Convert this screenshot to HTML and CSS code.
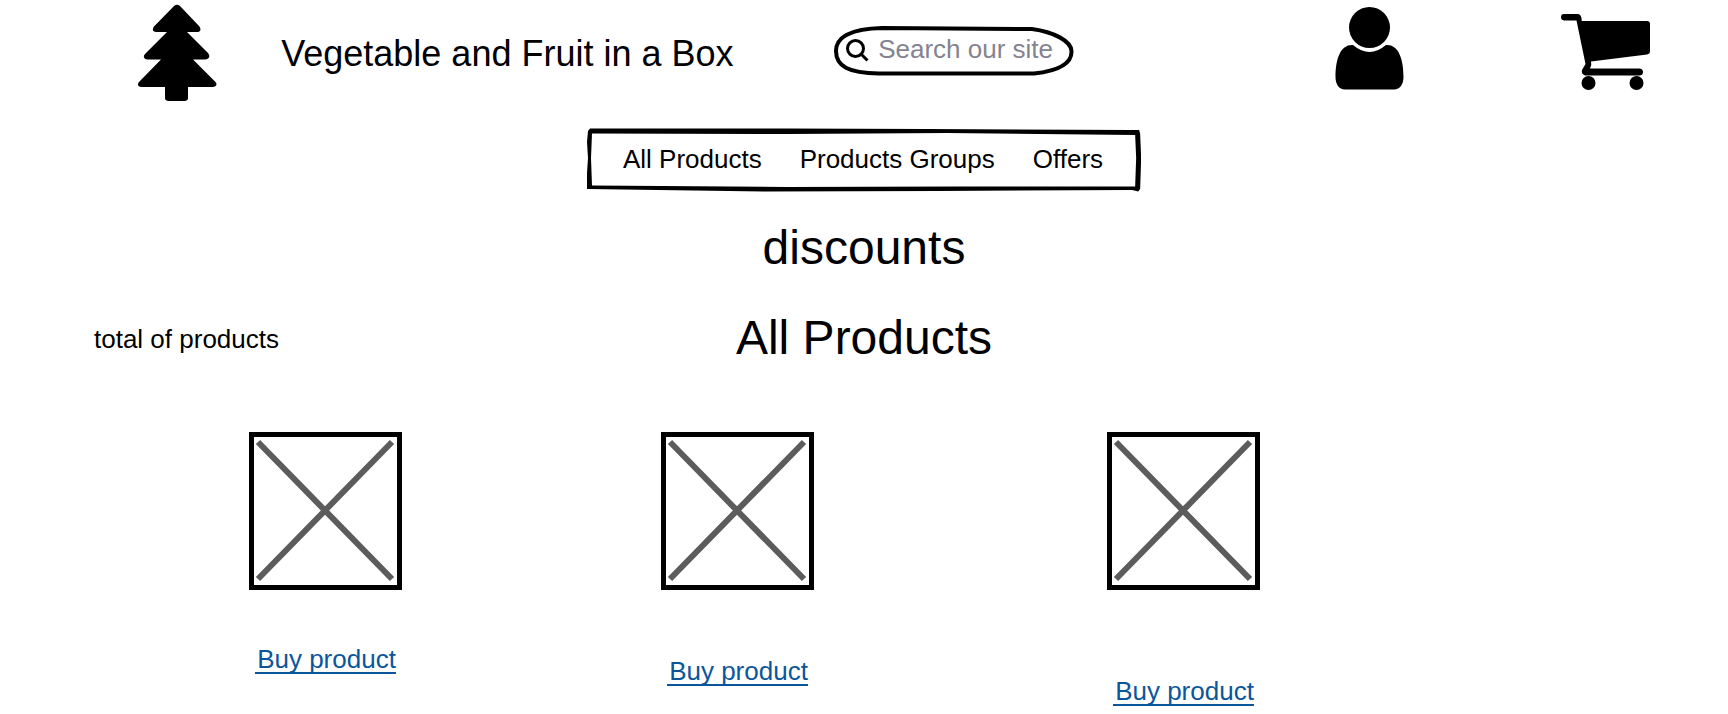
FILE: index.html
```html
<!DOCTYPE html>
<html lang="en">
<head>
<meta charset="utf-8">
<meta name="viewport" content="width=device-width, initial-scale=1">
<title>Vegetable and Fruit in a Box</title>
<link rel="stylesheet" href="styles.css">
</head>
<body>
<header class="header">
  <a class="icon-link" href="#" aria-label="Home">
    <svg class="logo" viewBox="0 0 80 98" aria-hidden="true">
      <path d="M36 2Q39-.5 42 2L61 22C64 26 62 28 58.500 28H49L70 49C73 53 70.500 55.500 67 55.500H55L77.500 78C80 81 77.500 83 74.500 83H50V93Q50.500 97 46.500 97H31Q26.500 97 27 93V83H3.500C0 83-1 80.500 1 78L23 55.500H9.500C5.500 55.500 5 52 7 50L29 28H18.500C14.500 28 14 25.500 16 22.500Z"/>
    </svg>
  </a>
  <p class="brand">Vegetable and Fruit in a Box</p>
  <form class="search" role="search">
    <svg class="frame" viewBox="0 0 240 50" preserveAspectRatio="none" aria-hidden="true">
      <path d="M48 2L198 3C220 6 237 15 237.500 25C238 38 222 45 200 47.500H45C14 47 2 40 2 25C2 12 14 3 48 2Z"/>
    </svg>
    <svg class="search-icon" viewBox="0 0 24 24" aria-hidden="true">
      <circle cx="9.500" cy="9.500" r="8"/><path d="M15 15L21.500 21.500"/>
    </svg>
    <input class="search-input" type="text" placeholder="Search our site" aria-label="Search our site">
  </form>
  <a class="icon-link" href="#" aria-label="Account">
    <svg class="user" viewBox="0 0 70 92" aria-hidden="true">
      <circle cx="34.500" cy="20.500" r="20.500"/>
      <path d="M18 38Q34.500 52 51 38C63 37 68.500 51 68.500 70C68.500 77 65 82.500 59 82.500H10C4 82.500 .5 77 .5 70C.5 51 6 37 18 38Z"/>
    </svg>
  </a>
  <a class="icon-link" href="#" aria-label="Cart">
    <svg class="cart" viewBox="0 0 90 78" aria-hidden="true">
      <path d="M3 0H17Q20.500 0 20.800 7H86Q89 7 89 10V37Q89 40 86 40.500L30 47.500Q31 51 29 54.500H79Q82 55 82 58Q82 61 79 61.500H24Q20 60 21 56L24.500 50L15.500 6.500H3Q0 6 0 3Q0 0 3 0Z"/>
      <circle cx="27.500" cy="69" r="7"/><circle cx="75.500" cy="69" r="7"/>
    </svg>
  </a>
</header>

<nav class="nav" aria-label="Main">
  <svg class="frame" viewBox="0 0 554 64" preserveAspectRatio="none" aria-hidden="true">
    <path class="frame-fill" fill-rule="evenodd" d="M3 0.500L200 0.500L340 1L545 2L552 2L553 6L554 30L553 61L551 63.500L545 62L350 63L180 63.500L0 61L0 45L1 30L0 14L1 3ZM5 5.500L4 30L5 57.500L200 59L370 58.500L548 58.500L549 30L548 7L360 5L200 6Z"/>
  </svg>
  <a class="nav-link" href="#">All Products</a>
  <a class="nav-link" href="#">Products Groups</a>
  <a class="nav-link" href="#">Offers</a>
</nav>

<main>
  <h2 class="heading">discounts</h2>
  <div class="title-row">
    <p class="total">total of products</p>
    <h1 class="heading">All Products</h1>
  </div>
  <section class="products" aria-label="Products">
    <article class="product">
      <svg class="picture" viewBox="0 0 153 158" role="img" aria-label="Product picture">
        <path class="picture-frame" d="M2.500 2.500H150.500V155.500H2.500Z"/><path class="picture-cross" d="M9 10L143 147M143 10L9 147"/>
      </svg>
      <a class="buy" href="#">Buy product</a>
    </article>
    <article class="product product-lower">
      <svg class="picture" viewBox="0 0 153 158" role="img" aria-label="Product picture">
        <path class="picture-frame" d="M2.500 2.500H150.500V155.500H2.500Z"/><path class="picture-cross" d="M9 10L143 147M143 10L9 147"/>
      </svg>
      <a class="buy" href="#">Buy product</a>
    </article>
    <article class="product product-lowest">
      <svg class="picture" viewBox="0 0 153 158" role="img" aria-label="Product picture">
        <path class="picture-frame" d="M2.500 2.500H150.500V155.500H2.500Z"/><path class="picture-cross" d="M9 10L143 147M143 10L9 147"/>
      </svg>
      <a class="buy" href="#">Buy product</a>
    </article>
  </section>
</main>
</body>
</html>
```
FILE: styles.css
```css
* {
  box-sizing: border-box;
}

body {
  margin: 0;
  background: #fff;
  color: #000;
  font-family: "Liberation Sans", Arial, sans-serif;
  font-size: 26px;
  line-height: 30px;
}

p,
h1,
h2 {
  margin: 0;
}

svg {
  display: block;
}

.header {
  display: grid;
  grid-template-columns: 143fr 553fr 501fr 226fr 167fr;
  align-items: center;
  justify-items: start;
  padding: 4px 0 4px 8%;
}

.icon-link {
  color: #000;
}

.logo {
  width: 80px;
  height: 98px;
}

.brand {
  padding-top: 2px;
  font-size: 36px;
  line-height: 40px;
}

.user {
  width: 70px;
  height: 92px;
}

.cart {
  width: 90px;
  height: 78px;
}

.search {
  position: relative;
  display: flex;
  align-items: center;
  gap: 8px;
  width: 240px;
  height: 50px;
  margin-bottom: 4px;
  padding: 0 8px 4px 12px;
}

.frame {
  position: absolute;
  inset: 0;
  width: 100%;
  height: 100%;
  fill: none;
  stroke: #000;
  stroke-width: 4px;
  pointer-events: none;
}

.frame-fill {
  fill: #000;
  stroke: none;
}

.search-icon {
  flex: none;
  width: 24px;
  height: 24px;
  margin-top: 4px;
  fill: none;
  stroke: #000;
  stroke-width: 3px;
}

.search-input {
  flex: 1;
  min-width: 0;
  padding: 0;
  border: 0;
  outline: 0;
  background: none;
  color: #000;
  font: inherit;
  appearance: none;
}

.search-input::placeholder {
  color: #848390;
  opacity: 1;
}

.nav {
  position: relative;
  display: flex;
  gap: 38px;
  width: fit-content;
  margin: 22px auto 0;
  padding: 16px 38px 18px 36px;
}

.nav-link {
  color: #000;
  text-decoration: none;
}

.heading {
  font-size: 48px;
  font-weight: 400;
  line-height: 56px;
  text-align: center;
}

main > .heading {
  margin-top: 28px;
}

.title-row {
  display: grid;
  grid-template-columns: 1fr auto 1fr;
  align-items: center;
  margin-top: 34px;
  padding: 0 94px;
}

.total {
  padding-top: 2px;
}

.products {
  display: grid;
  grid-template-columns: 412fr 446fr 621fr;
  margin-top: 66px;
  padding-left: 249px;
}

.product {
  display: flex;
  flex-direction: column;
  align-items: center;
  gap: 56px;
  width: 153px;
}

.product-lower {
  gap: 68px;
}

.product-lowest {
  gap: 88px;
}

.picture {
  width: 153px;
  height: 158px;
  fill: none;
}

.picture-frame {
  stroke: #000;
  stroke-width: 5px;
}

.picture-cross {
  stroke: #5c5c5d;
  stroke-width: 6px;
}

.buy {
  padding-left: 2px;
  border-bottom: 2px solid #0b569b;
  color: #0b569b;
  line-height: 26px;
  text-decoration: none;
  white-space: nowrap;
}
```
